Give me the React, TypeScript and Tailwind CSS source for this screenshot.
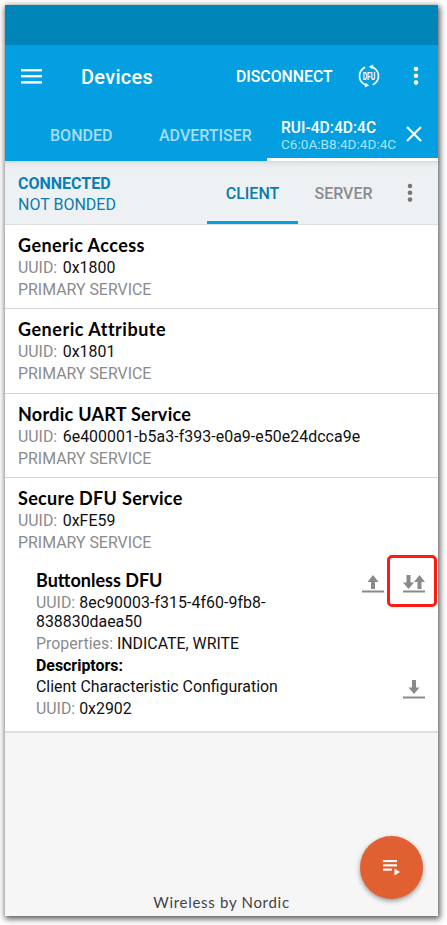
import React from "react";

const services = [
  { name: "Generic Access", uuid: "0x1800", nameClass: "tracking-[0.44px]", height: "h-[84px]" },
  { name: "Generic Attribute", uuid: "0x1801", nameClass: "tracking-[0.52px]", height: "h-[85px]" },
  {
    name: "Nordic UART Service",
    uuid: "6e400001-b5a3-f393-e0a9-e50e24dcca9e",
    nameClass: "tracking-[0.27px]",
    height: "h-[84px]",
  },
];

function Title({ children, className = "" }: { children: React.ReactNode; className?: string }) {
  return (
    <h2 className={`h-[22px] font-['Lato',sans-serif] text-[18px] leading-[22px] font-bold whitespace-nowrap text-black ${className}`}>
      {children}
    </h2>
  );
}

function ServiceInfo({ name, uuid, nameClass }: { name: string; uuid: string; nameClass: string }) {
  return (
    <div className="pt-[9px] pl-[13px] text-[15.9px] whitespace-nowrap">
      <Title className={nameClass}>{name}</Title>
      <div className="mt-[1px] leading-[22px]">
        <span className="text-[#8b8b8b]">UUID:&nbsp;</span>
        <span className="ml-[1.5px] tracking-[0.06px] text-[#111]">{uuid}</span>
      </div>
      <div className="leading-[22px] text-[#8b8b8b]">PRIMARY SERVICE</div>
    </div>
  );
}

function Kebab({ color }: { color: string }) {
  return (
    <svg width="6" height="20" viewBox="0 0 6 20" fill={color}>
      <circle cx="3" cy="3" r="2.3" />
      <circle cx="3" cy="9.8" r="2.3" />
      <circle cx="3" cy="16.6" r="2.3" />
    </svg>
  );
}

function UploadIcon() {
  return (
    <svg width="22" height="18" viewBox="0 0 22 18" fill="#8a8a8a">
      <path d="M11 0L16.5 7H13V14H9V7H5.5Z" />
      <rect y="15.5" width="22" height="2" />
    </svg>
  );
}

function DownloadIcon() {
  return (
    <svg width="22" height="19" viewBox="0 0 22 19" fill="#8a8a8a">
      <path d="M9 0H13V7.5H16.5L11 14L5.5 7.5H9Z" />
      <rect y="16.5" width="22" height="2" />
    </svg>
  );
}

function IndicateIcon() {
  return (
    <svg width="22" height="18" viewBox="0 0 22 18" fill="#8a8a8a">
      <path d="M3.5 0H7.5V7.5H11L5.5 14L0 7.5H3.5Z" />
      <path d="M16.5 0L22 7H18.5V14H14.5V7H11Z" />
      <rect y="15.5" width="22" height="2" />
    </svg>
  );
}

function DfuIcon() {
  return (
    <svg className="overflow-visible" width="24" height="24" viewBox="0 0 24 24" fill="none" stroke="white" strokeWidth="1.7">
      <path d="M8.2 3.2A9.6 9.6 0 0 0 5.8 19.2Q7.5 20.8 10 21.2" />
      <path d="M15.8 20.8A9.6 9.6 0 0 0 18.2 4.8Q16.5 3.2 14 2.8" />
      <path d="M12.2 2.6L16 .9L15.2 4.7Z M11.8 21.4L8 23.1L8.8 19.3Z" fill="white" strokeWidth=".5" />
      <text
        x="5.7"
        y="16"
        textLength="12.6"
        lengthAdjust="spacingAndGlyphs"
        fill="white"
        stroke="none"
        className="font-['Roboto',sans-serif] text-[11px] font-bold"
      >
        DFU
      </text>
    </svg>
  );
}

export default function App() {
  return (
    <div className="h-[925px] w-[447px] overflow-hidden bg-white pt-[5px] pl-[5px] font-['Roboto',sans-serif]">
      <div className="relative flex h-[911px] w-[433px] flex-col bg-[#f6f6f6] shadow-[1px_2px_6px_1px_rgba(0,0,0,0.65)]">
        <div className="h-10 shrink-0 bg-[#0085b9]" />

        <header className="h-[116px] shrink-0 bg-[#039fe1] text-white">
          <div className="flex h-[62px] items-center pl-4">
            <svg width="21" height="15" viewBox="0 0 21 15" fill="white">
              <rect width="21" height="2.4" />
              <rect y="6" width="21" height="2.4" />
              <rect y="12.2" width="21" height="2.4" />
            </svg>
            <h1 className="ml-[39px] w-[155px] pt-px text-[20px] leading-6 font-medium tracking-[0.28px]">Devices</h1>
            <span className="w-[121px] pt-[2px] text-[15.8px] font-medium whitespace-nowrap">DISCONNECT</span>
            <DfuIcon />
            <div className="ml-[32px]">
              <Kebab color="white" />
            </div>
          </div>
          <nav className="flex h-[54px] text-[16px] font-medium whitespace-nowrap">
            <span className="ml-[45px] w-[109px] pt-[18px] leading-[22px] text-[#a5def5]">BONDED</span>
            <span className="w-[108px] pt-[18px] leading-[22px] text-[#a5def5]">ADVERTISER</span>
            <div className="flex w-[171px] border-b-[3px] border-white pl-[14px]">
              <div className="w-[125px] pt-[13px]">
                <div className="text-[15.6px] leading-[16px]">RUI-4D:4D:4C</div>
                <div className="text-[13.6px] leading-[16px] font-normal text-[#a5e6fa]">C6:0A:B8:4D:4D:4C</div>
              </div>
              <svg className="mt-[19px]" width="16" height="16" viewBox="0 0 16 16" stroke="white" strokeWidth="2.1">
                <path d="M1 1L15 15M15 1L1 15" />
              </svg>
            </div>
          </nav>
        </header>

        <div className="flex h-[64px] shrink-0 border-b border-[#dedfe0] bg-[linear-gradient(#d3d9dc,#e6eaeb_3px,#eef1f4_8px)] text-[16px] whitespace-nowrap">
          <div className="w-[202px] pt-[12px] pl-[13px] text-[#087da9]">
            <div className="leading-[21px] font-bold text-[#087fb8]">CONNECTED</div>
            <div className="leading-[22px]">NOT BONDED</div>
          </div>
          <div className="w-[91px] border-b-[3px] border-[#039fe1] pt-[21px] text-center leading-[23px] font-medium text-[#087da9]">
            CLIENT
          </div>
          <div className="w-[91px] pt-[21px] text-center leading-[23px] font-medium text-[#8a8c8e]">SERVER</div>
          <div className="ml-[18px] pt-[22px]">
            <Kebab color="#777" />
          </div>
        </div>

        <main className="h-[508px] shrink-0 border-b-2 border-[#dedede] bg-white">
          {services.map((service) => (
            <section key={service.name} className={`${service.height} border-b border-[#d5d5d5]`}>
              <ServiceInfo {...service} />
            </section>
          ))}
          <section>
            <ServiceInfo name="Secure DFU Service" uuid="0xFE59" nameClass="tracking-[0.33px]" />
            <div className="flex pt-[15px] pl-[31px]">
              <div className="w-[326px] text-[15.9px] whitespace-nowrap text-[#111]">
                <Title>Buttonless DFU</Title>
                <div className="pt-[2px] leading-[19px]">
                  <span className="text-[#8b8b8b]">UUID: </span>
                  <span className="tracking-[0.06px]">8ec90003-f315-4f60-9fb8-</span>
                  <br />
                  838830daea50
                </div>
                <div className="pt-[2px] leading-[22px]">
                  <span className="text-[#8b8b8b]">Properties: </span>INDICATE, WRITE
                </div>
                <div className="leading-[21px] font-bold text-black">Descriptors:</div>
                <div className="leading-[22px]">Client Characteristic Configuration</div>
                <div className="leading-[21px]">
                  <span className="text-[#8b8b8b]">UUID: </span>0x2902
                </div>
              </div>
              <div className="pt-[6px]">
                <UploadIcon />
              </div>
              <div className="ml-[19px] pt-[6px]">
                <IndicateIcon />
                <div className="mt-[87px]">
                  <DownloadIcon />
                </div>
              </div>
            </div>
          </section>
        </main>

        <footer className="flex flex-1 items-end justify-center pb-[2px] text-[#444]">
          <span className="font-['Lato',sans-serif] text-[15px] leading-6 tracking-[0.7px]">Wireless by Nordic</span>
        </footer>

        <div className="absolute top-[550px] left-[382px] h-[52px] w-[50px] rounded-[5px] border-[3.5px] border-[#ff1b10]" />
        <button className="absolute top-[831px] left-[355px] flex h-[63px] w-[63px] items-center justify-center rounded-full bg-[#e06032] shadow-[0_2px_5px_rgba(0,0,0,0.4)]">
          <svg width="17" height="17" viewBox="0 0 17 17" fill="white">
            <rect y="1" width="14" height="2.1" />
            <rect y="5.3" width="14" height="2.1" />
            <rect y="9.6" width="9" height="2.1" />
            <path d="M11.5 9.6L17 13L11.5 16.4Z" />
          </svg>
        </button>
      </div>
    </div>
  );
}
